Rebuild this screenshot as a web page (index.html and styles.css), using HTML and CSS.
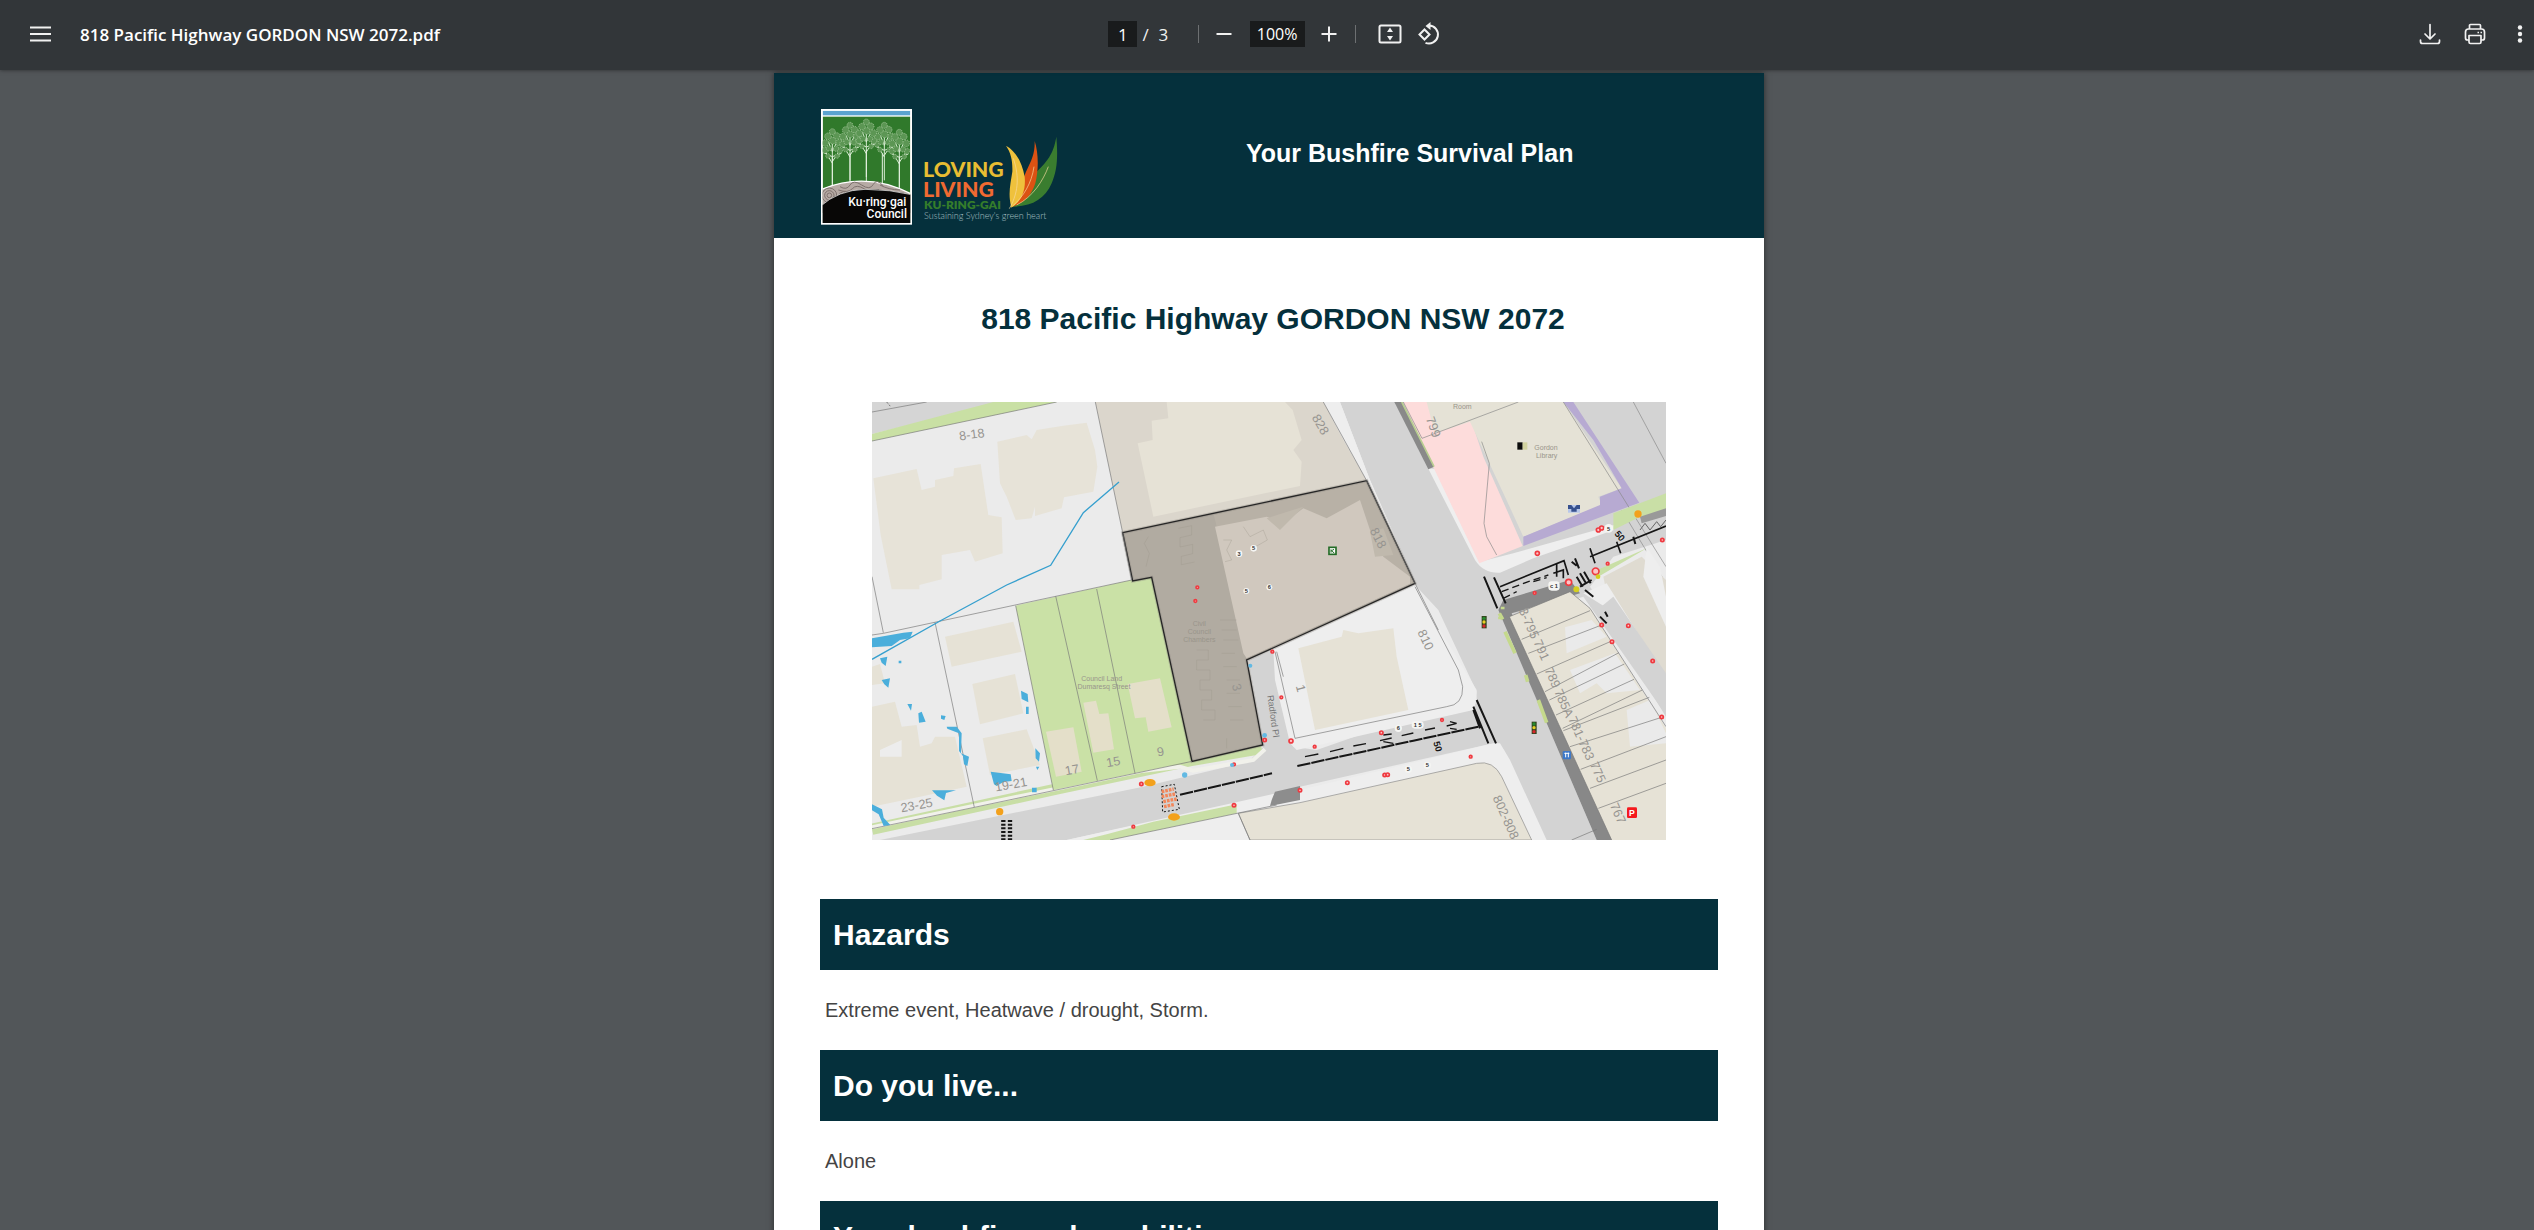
FILE: index.html
```html
<!DOCTYPE html>
<html lang="en">
<head>
<meta charset="utf-8">
<meta name="viewport" content="width=device-width, initial-scale=1">
<title>818 Pacific Highway GORDON NSW 2072.pdf</title>
<link rel="stylesheet" href="styles.css">
</head>
<body>
<header class="toolbar">
  <div class="toolbar-start">
    <button class="icon-button" aria-label="Menu"><svg width="24" height="24" viewBox="0 0 24 24"><path d="M2 5.500h21M2 12h21M2 18.500h21" stroke="currentColor" stroke-width="2"/></svg></button>
    <span class="file-name">818 Pacific Highway GORDON NSW 2072.pdf</span>
  </div>
  <div class="toolbar-center">
    <input class="field page-field" type="text" value="1" aria-label="Page number">
    <span class="slash">/</span><span class="page-total">3</span>
    <span class="separator"></span>
    <button class="icon-button" aria-label="Zoom out"><svg width="24" height="24" viewBox="0 0 24 24"><path d="M4.500 12h15" stroke="currentColor" stroke-width="2"/></svg></button>
    <input class="field zoom-field" type="text" value="100%" aria-label="Zoom level">
    <button class="icon-button" aria-label="Zoom in"><svg width="24" height="24" viewBox="0 0 24 24"><path d="M4.500 12h15M12 4.500v15" stroke="currentColor" stroke-width="2"/></svg></button>
    <span class="separator"></span>
    <button class="icon-button fit-button" aria-label="Fit to page"><svg width="24" height="24" viewBox="0 0 24 24"><rect x="1.500" y="3.500" width="21" height="17" rx="1.500" fill="none" stroke="currentColor" stroke-width="2"/><path d="M12 5.500l3 4.500H9zM12 18.500l3-4.500H9z" fill="currentColor"/></svg></button>
    <button class="icon-button" aria-label="Rotate"><svg width="24" height="24" viewBox="0 0 24 24"><g fill="none" stroke="currentColor" stroke-width="2"><path d="M7.500 7.500l5 5-5 5-5-5z"/><path d="M12 3.500a9 9 0 1 1-3.500 17.300"/></g><path d="M13.500 0v8L8.500 4z" fill="currentColor"/></svg></button>
  </div>
  <div class="toolbar-end">
    <button class="icon-button" aria-label="Download"><svg width="24" height="24" viewBox="0 0 24 24" fill="none" stroke="currentColor" stroke-width="1.700" stroke-linecap="round" stroke-linejoin="round"><path d="M12 2.500v14M7 12l5 5 5-5M2.500 18v1.500a2 2 0 0 0 2 2h15a2 2 0 0 0 2-2V18"/></svg></button>
    <button class="icon-button" aria-label="Print"><svg width="24" height="24" viewBox="0 0 24 24" fill="none" stroke="currentColor" stroke-width="1.700" stroke-linejoin="round"><path d="M6.500 7V3.500a1 1 0 0 1 1-1h9a1 1 0 0 1 1 1V7M6 18H4.500a2 2 0 0 1-2-2v-6a3 3 0 0 1 3-3h13a3 3 0 0 1 3 3v6a2 2 0 0 1-2 2H18"/><path d="M6 13.500h12V20a1.500 1.500 0 0 1-1.500 1.500h-9A1.500 1.500 0 0 1 6 20z"/><path d="M14.500 10.500h1.500M17.500 10.500h1.500"/></svg></button>
    <button class="icon-button" aria-label="More actions"><svg width="24" height="24" viewBox="0 0 24 24" fill="currentColor"><circle cx="12" cy="5.500" r="2.200"/><circle cx="12" cy="12" r="2.200"/><circle cx="12" cy="18.500" r="2.200"/></svg></button>
  </div>
</header>
<main class="viewer">
<article class="page">
  <header class="banner">
    <svg class="logo" viewBox="153 147 720 348" role="img" aria-label="Ku-ring-gai Council, Loving Living Ku-ring-gai">
      <defs>
        <g id="tree">
          <path d="M0 175V35M0 105l-20-34M0 100l22-34M0 70l-12-30M0 70l14-30M0 85l-26-12M0 85l27-10" fill="none" stroke="#d8ecd2" stroke-width="3"/>
          <g fill="#5c9654" stroke="#bcd9b4" stroke-width="2" stroke-dasharray="3 3">
            <circle cx="0" cy="10" r="9"/><circle cx="-13" cy="24" r="10"/><circle cx="13" cy="23" r="10"/><circle cx="-21" cy="44" r="10"/><circle cx="1" cy="37" r="10"/><circle cx="21" cy="43" r="10"/><circle cx="-22" cy="66" r="9"/><circle cx="22" cy="66" r="9"/><circle cx="-10" cy="60" r="8"/><circle cx="11" cy="61" r="8"/><circle cx="-13" cy="83" r="7"/><circle cx="14" cy="83" r="7"/>
          </g>
        </g>
        <clipPath id="emblem"><rect x="158" y="152" width="263" height="337"/></clipPath>
      </defs>
      <rect x="153" y="147" width="273" height="347" fill="#fff"/>
      <g clip-path="url(#emblem)">
        <rect x="158" y="152" width="263" height="14" fill="#5ba3d0"/>
        <rect x="158" y="170" width="263" height="320" fill="#30792b"/>
        <use href="#tree" x="187" y="205"/><use href="#tree" x="240" y="186"/><use href="#tree" x="343" y="186"/><use href="#tree" x="388" y="207"/><use href="#tree" x="289" y="176"/>
        <path d="M187 290v90M240 280v90M289 270v98M337 280v90M388 290v95" stroke="#e6f1e2" stroke-width="3"/>
        <path d="M150 390Q290 330 430 405V460H150z" fill="#b6aaa4" stroke="#fff" stroke-width="4"/>
        <g fill="none" stroke="#7d716d" stroke-width="3"><circle cx="178" cy="406" r="7"/><circle cx="178" cy="406" r="14"/><circle cx="178" cy="406" r="22"/><path d="M210 380q20 12 30-5t35 0 35-2 30 5M205 390q30 10 42-4t35 0 45 2M208 400q12-8 25-4M330 375q25 14 60 15"/></g>
        <path d="M150 440Q205 390 285 388Q360 388 430 405V495H150z" fill="#080706" stroke="#fff" stroke-width="2"/>
      </g>
      <g class="logo-council" text-anchor="end"><text x="409" y="437">Ku·ring·gai</text><text x="411" y="475">Council</text></g>
      <text class="logo-word" x="459" y="350" fill="#e8bd32">LOVING</text>
      <text class="logo-word" x="459" y="410" fill="#f06a31">LIVING</text>
      <text class="logo-place" x="462" y="446" fill="#357d2b">KU-RING-GAI</text>
      <text class="logo-tag" x="462" y="477" fill="#a9c1c5">Sustaining Sydney's green heart</text>
      <path d="M859 230C864 290 862 330 845 370C825 417 785 440 728 440C765 400 775 365 800 335C830 305 850 285 859 230z" fill="#3a7d2f"/>
      <path d="M794 243C806 280 806 330 796 370C783 410 760 430 726 441C745 405 755 365 768 335C785 300 795 280 794 243z" fill="#dc5213"/>
      <path d="M708 257C740 275 757 310 764 350C768 390 755 425 724 443C713 400 722 370 727 335C728 305 724 280 708 257z" fill="#efc13c"/>
      <path d="M718 446C750 390 745 340 730 295M728 438C760 410 785 370 792 320M740 435C790 410 820 360 835 320" fill="none" stroke="#f8d9a0" stroke-width="2"/>
    </svg>
    <h1 class="plan-title">Your Bushfire Survival Plan</h1>
  </header>
  <h2 class="address">818 Pacific Highway GORDON NSW 2072</h2>
  <svg class="map" viewBox="36 36 2382 1314" role="img" aria-label="Map of 818 Pacific Highway">
    <rect x="36" y="36" width="2382" height="1314" fill="#ebebeb"/>
    <!-- street along the north-west corner -->
    <path d="M36 36H430L36 132z" fill="#d5d5d5"/>
    <path d="M36 132L400 36H590L36 153z" fill="#c9e0a4"/>
    <path d="M36 66L200 36" stroke="#777" stroke-width="2"/>
    <!-- highway and side streets -->
    <path d="M1440 36H2418V450L2260 500L2190 590L2418 900V975L2170 620L1930 690L2060 1000L2210 1350H2050L1940 1100Q1930 1060 1890 1062L1320 1190L1180 1230L620 1350H60L850 1190L1165 1115L1210 1070L1165 810L1240 780L1260 930L1300 1070L1370 1080L1570 1010L1840 950L1850 905L1735 660L1670 590L1530 270z" fill="#d3d3d3"/>
    <!-- footpaths -->
    <path d="M1390 36H1440L1530 270L1670 590L1735 710L1850 900V930L1840 960L1310 1080L1290 1060L1245 870L1240 780L1660 590L1520 272z" fill="#eee"/>
    <path d="M1705 236H1725L1860 515L1960 490L2262 405V420L2020 505L1920 548Q1870 550 1845 510z" fill="#efefef"/>
    <path d="M36 1318L590 1197L990 1112L1205 1075" fill="none" stroke="#c8dea5" stroke-width="34"/>
    <path d="M36 1312L300 1256L590 1196L850 1142L960 1130L1000 1142L1180 1110L1215 1078" fill="none" stroke="#f1f1eb" stroke-width="12"/>
    <path d="M620 1350L1240 1212L1320 1200L1900 1060H1920L1950 1110L2060 1350z" fill="#eee"/>
    <path d="M740 1333L880 1295L1130 1243V1270L750 1350H670z" fill="#c9dfa6"/>
    <path d="M1235 1230L1245 1205L1320 1188V1230L1230 1248z" fill="#8d8d8d"/>
    <!-- buildings north-west -->
    <g fill="#e7e3d8">
      <path d="M40 265L170 237L185 300L225 290V270L280 258L282 235L362 222L385 375L425 382L428 490L345 515L330 480L245 495V568L178 585V598H95L62 435z"/>
      <path d="M412 155L500 135L515 148L530 120L610 107L680 98L705 180L712 230L700 305L612 322L605 355L525 378V350L515 385L467 390L440 320L420 280z"/>
    </g>
    <!-- buildings south-west -->
    <g fill="#e6e2d6">
      <path d="M255 740L460 695L485 785L275 830z"/><path d="M337 882L465 852L490 970L360 1003z"/><path d="M368 1045L500 1018L540 1125L390 1155z"/>
      <path d="M36 950L105 935L125 1010L170 1005L180 1070L215 1060L225 1040L285 1040L320 1190L180 1220L36 1250z"/><path d="M36 830L60 822L75 880L36 885z"/>
    </g>
    <path d="M60 1080L125 1050V1100H60z" fill="#ededed"/>
    <!-- council lots -->
    <path d="M467 647L815 570L875 562L996 1114L580 1200z" fill="#cae1a6"/>
    <g fill="#e4dfc9"><path d="M558 1025L640 1012L665 1145L588 1160z"/><path d="M670 938L708 932L718 972L745 970L762 1078L700 1088z"/><path d="M803 882L900 865L935 1012L865 1025L857 982L825 985z"/></g>
    <!-- lot to the north -->
    <path d="M706 36H1390L1445 140L1520 272L788 428z" fill="#dbd6cc"/>
    <path d="M920 36H1275L1298 60L1325 150L1300 180L1325 215L1320 288L880 380L833 160L878 150L875 92L925 85z" fill="#e6e2d6"/>
    <!-- highlighted property -->
    <path d="M788 428L1520 272L1665 580L1160 810L1208 1065L996 1114L875 562L818 573z" fill="#b8b1a6"/>
    <path d="M788 428L1060 370L1100 530L1160 810L1170 850L1208 1065L996 1114L875 562L818 573z" fill="#b1aba1"/>
    <path d="M1065 410L1220 380L1270 400L1330 355L1400 385L1500 330L1530 420L1570 500L1650 560V582L1160 805L1150 790z" fill="#d0c8be"/>
    <path d="M1220 385L1330 350L1260 420zM1530 425L1570 415L1600 495L1545 500z" fill="#c0b9ad"/>
    <path d="M788 428L1520 272L1665 580L1160 810L1208 1065L996 1114L875 562L818 573z" fill="none" stroke="#8f8a82" stroke-width="10" stroke-opacity=".4"/>
    <path d="M788 428L1520 272L1665 580L1160 810L1208 1065L996 1114L875 562L818 573z" fill="none" stroke="#262626" stroke-width="4"/>
    <g fill="none" stroke="#9b958b" stroke-width="2" opacity=".5"><path d="M955 415l40-8v28l-35 8v28l38-8v28l-34 8v25l40-8M865 440l-12 20 15 30-10 40M1090 450h25l-15 30 15 30-20 5M1150 410l20 30 40-20 12 30-35 20M1080 690h50M1085 720h45M1090 750h45M1085 790h40M1090 830h40M1100 870h40M1100 910h40M1105 950h40M1110 990h40M1010 780h35v30h-35v30h40v30h-30v30h35v30h-30v30h40v30h-35M1100 1045v30"/></g>
    <!-- lot 810 -->
    <path d="M1315 775L1445 740L1450 720L1495 730L1600 715L1610 800L1645 960L1365 1020z" fill="#e6e2d6"/>
    <path d="M1245 785L1305 1045L1760 950Q1810 945 1808 890L1795 840L1665 590M1250 785L1270 860" fill="none" stroke="#777" stroke-width="2"/>
    <!-- lot 802-808 -->
    <path d="M1135 1270L1320 1238L1850 1120Q1900 1110 1925 1160L2015 1350H1170z" fill="#e6e2d6" stroke="#8a8a8a" stroke-width="2"/>
    <!-- library block -->
    <path d="M1630 36H1715L1835 95L1870 200L1988 468L1858 520L1700 190z" fill="#fddcdb"/>
    <path d="M1700 36H2110L2285 295L2215 320L2225 345L1990 440L1935 320L1830 95L1725 130z" fill="#e5e2d6"/>
    <path d="M2110 36H2140L2338 338L1990 468V440L2220 345V320L2285 295L2200 150z" fill="#b7aad2"/>
    <path d="M1603 36H1625L1722 230L1705 238z" fill="#898989"/><path d="M1625 36L1722 230" stroke="#b7ce90" stroke-width="5"/>
    <path d="M1630 36L1686 145L1975 36M1865 155L1888 220L1872 400L1880 440L1910 495M2110 36L2418 530M2320 36L2418 220M2285 360L2460 650" fill="none" stroke="#888" stroke-width="2"/>
    <!-- east green verge and streets -->
    <path d="M2260 370L2418 310V370L2340 380L2260 420zM2200 545L2360 475L2215 560z" fill="#c9dfa6"/>
    <path d="M2340 380L2418 355V378L2345 400z" fill="#999"/>
    <path d="M2230 560L2345 500L2418 570V880L2240 610z" fill="#dfdbd1"/><path d="M2170 610L2240 580L2418 865V920L2250 660z" fill="#eee"/><path d="M2360 470L2400 530L2418 620V710L2350 560z" fill="#eee"/>
    <path d="M1915 660L1930 630L2130 570L2160 610L1955 670L2265 1350H2210L2060 1000z" fill="#888"/>
    <path d="M2218 655L2418 980V850L2260 620z" fill="#d3d3d3"/>
    <!-- shop lots -->
    <path d="M1948 680L2130 605L2190 655L2418 1015V1350H2255z" fill="#e6e2d6"/>
    <path d="M2115 712L2195 690L2240 740L2120 790zM2130 840L2265 790L2340 900L2240 910L2210 880L2160 910zM2300 960L2370 930L2418 1030V1060L2310 1070z" fill="#eaeaea"/>
    <path d="M1948 680L2130 605L2190 655L2418 1010M1948 680L2255 1350M1985 748L2190 662M2005 790L2225 705M2030 852L2255 753M2055 905L2277 788M2068 930L2293 822M2088 975L2322 868M2108 1015L2347 900M2110 1022L2368 922M2130 1070L2405 982M2162 1138L2418 1040M2190 1195L2418 1110M2215 1255L2418 1180M2135 1350L2210 1318" fill="none" stroke="#777" stroke-width="2"/>
    <path d="M1918 670l10 18M1935 725l30 65M1997 855l6 20M2035 930l25 68M1928 650v8M1920 680v8" stroke="#c5d98c" stroke-width="11"/>
    <!-- lot boundaries -->
    <path d="M36 153L590 36M706 36L788 428L815 570L70 730L36 735M36 560L70 728M225 697L343 1252M467 647L580 1200M587 618L712 1172M710 597L825 1150M36 1316L343 1252L996 1114M1390 36L1520 272L1665 580L1735 720M750 1350L1250 1245M1135 1270L1170 1350" fill="none" stroke="#777" stroke-width="2"/>
    <!-- watercourse -->
    <path d="M777 276L670 368L572 526L440 585L240 693L36 808" fill="none" stroke="#359fce" stroke-width="4"/>
    <path d="M36 745L130 728L158 725L150 745L120 750L95 768L36 772zM60 805l22-5-5 28-12-10zM65 870l25-5-5 28-12-10zM483 902l20 10 2 25-20-10zM498 950h8v22h-8zM142 942h14l-3 20zM175 970l10-5 12 30-20 3zM243 976l14 2-4 12-10-4zM260 1010h30l15 20-2 60 24 10-5 28-10-5-3-25-12-15V1030l-35-14zM526 1075l14 15-3 25-10-10zM528 1130h10l-6 10zM392 1145l60 8 3 20-25 3-20 12-8-5zM216 1201h72l-30 8-5 22-22-14zM516 1193h14v14h-14zM36 1243l30 15 5 25 20 22-20 3-15-35-20-12zM116 812h8v8h-8z" fill="#4aaedb"/>
    <!-- road markings -->
    <g fill="none" stroke="#161616">
      <path d="M960 1214L1236 1150M1312 1128L1660 1052L1855 1010" stroke-width="6" stroke-dasharray="40 3"/>
      <path d="M1335 1100l40-8M1410 1085l40-10M1480 1068l38-7M1560 1052l35-8M1625 1037l35-8M1695 1020l30-6M1760 1008l30-8M1570 1035l25-3M1570 1055l30 5M1770 995l20 5M1770 1015l20 3" stroke-width="4"/>
      <path d="M1840 950L1885 1060M1850 930L1908 1060M1840 960L1860 1015M1872 560L1912 655M1902 562L1937 640" stroke-width="6"/>
      <path d="M1920 590L2112 512L2125 555M2190 500L2418 408M2270 455l12 35M2190 475l15 45M2080 550l30-10v25M2090 520v40" stroke-width="5"/>
      <path d="M1925 605l80-30 60-20M1930 625l40-20M2020 575l40-12" stroke-width="4" stroke-dasharray="22 12"/>
      <path d="M2150 560l18 30M2160 550l18 30M2172 545l20 35M2145 505l12 30M2135 515l15 12M2175 600l25 20M2220 680l20 20M2235 665l8 15M2320 440l6 22M2160 590l35-20" stroke-width="6"/>
      <path d="M2340 420l15-20 15 20 20-25 12 15 16-20" stroke="#666" stroke-width="3"/>
      <path d="M430 1290v60M450 1290v60" stroke-width="13" stroke-dasharray="6 5"/>
      <path d="M905 1190l38-7 15 75-50 8z" stroke-width="3" stroke-dasharray="6 6"/>
      <path d="M80 36l12 14" stroke="#555" stroke-width="3" stroke-dasharray="3 3"/>
    </g>
    <path d="M905 1205l36-8M905 1220l40-8M910 1235l40-8M912 1250l30-6" stroke="#f2875a" stroke-width="10" stroke-dasharray="8 3"/>
    <!-- signs -->
    <g fill="#fbc5c7" stroke="#ef3a40" stroke-width="5">
      <circle cx="1012" cy="592" r="4"/><circle cx="1006" cy="633" r="4"/><circle cx="1237" cy="785" r="4"/><circle cx="1264" cy="922" r="4"/><circle cx="1293" cy="1053" r="6"/><circle cx="1214" cy="1050" r="5"/><circle cx="1564" cy="1028" r="5"/><circle cx="1364" cy="1070" r="4"/><circle cx="1746" cy="990" r="4"/><circle cx="1832" cy="1100" r="4"/><circle cx="1574" cy="1155" r="5"/><circle cx="1583" cy="1154" r="5"/><circle cx="1462" cy="1178" r="5"/><circle cx="1320" cy="1201" r="5"/><circle cx="1122" cy="1246" r="5"/><circle cx="820" cy="1310" r="4"/><circle cx="844" cy="1182" r="5"/><circle cx="1122" cy="1123" r="4"/><circle cx="2032" cy="490" r="6"/><circle cx="2215" cy="420" r="6"/><circle cx="2225" cy="414" r="6"/><circle cx="2024" cy="609" r="4"/><circle cx="2126" cy="577" r="9"/><circle cx="2207" cy="544" r="10"/><circle cx="2243" cy="521" r="4"/><circle cx="2407" cy="450" r="5"/><circle cx="2225" cy="705" r="5"/><circle cx="2256" cy="755" r="5"/><circle cx="2305" cy="707" r="5"/><circle cx="2378" cy="813" r="5"/><circle cx="2405" cy="981" r="5"/>
    </g>
    <g fill="#f3a11c"><circle cx="419" cy="1265" r="11"/><ellipse cx="870" cy="1178" rx="17" ry="11"/><ellipse cx="942" cy="1281" rx="18" ry="11"/><circle cx="2334" cy="372" r="11"/></g>
    <g fill="#d4cf20"><circle cx="2149" cy="598" r="9"/><circle cx="2214" cy="560" r="7"/></g>
    <g fill="#62b9e3"><circle cx="1171" cy="827" r="6"/><circle cx="1214" cy="1036" r="7"/><circle cx="974" cy="1155" r="8"/><circle cx="1116" cy="1125" r="6"/></g>
    <g fill="#f5f5f3"><circle cx="1137" cy="491" r="10"/><circle cx="1181" cy="475" r="10"/><circle cx="1159" cy="603" r="9"/><circle cx="1228" cy="592" r="9"/><circle cx="1615" cy="1015" r="11"/><rect x="1655" y="994" width="36" height="22" rx="10"/><circle cx="1645" cy="1138" r="11"/><circle cx="1702" cy="1126" r="11"/><rect x="2065" y="574" width="34" height="28" rx="10"/><circle cx="2246" cy="415" r="13"/></g>
    <g class="map-sign" text-anchor="middle"><text x="1137" y="497">3</text><text x="1181" y="481">5</text><text x="1159" y="609">5</text><text x="1228" y="598">6</text><text x="1615" y="1021">6</text><text x="1673" y="1011">1 5</text><text x="1645" y="1144">5</text><text x="1702" y="1132">5</text><text x="2082" y="595">c 1</text><text x="2246" y="422">5</text></g>
    <g><rect x="1865" y="678" width="15" height="37" fill="#33451f"/><circle cx="1872" cy="685" r="5" fill="#288b2e"/><circle cx="1872" cy="696" r="5" fill="#e7cf23"/><circle cx="1872" cy="708" r="5" fill="#d7262b"/><rect x="2015" y="995" width="15" height="37" fill="#33451f"/><circle cx="2022" cy="1002" r="5" fill="#288b2e"/><circle cx="2022" cy="1013" r="5" fill="#e7cf23"/><circle cx="2022" cy="1025" r="5" fill="#d7262b"/></g>
    <rect x="1407" y="472" width="21" height="21" fill="#fff" stroke="#236c27" stroke-width="5"/><path d="M1413 478v10M1413 483l9-5M1415 483l8 6" stroke="#236c27" stroke-width="3"/>
    <rect x="1972" y="157" width="16" height="22" fill="#0c0c0c"/><rect x="1988" y="157" width="14" height="22" fill="#d2d3a0"/>
    <rect x="2124" y="345" width="36" height="23" fill="#b7c7ea"/><path d="M2124 345h10l8 10 8-10h10v12h-10v8h-16v-8h-10z" fill="#36508e"/>
    <rect x="2108" y="1083" width="25" height="25" rx="4" fill="#3d79c9"/><path d="M2113 1090h15M2117 1088v14M2125 1088v14" stroke="#fff" stroke-width="3"/>
    <rect x="2301" y="1252" width="30" height="32" rx="4" fill="#f5191d"/><text class="map-parking" x="2316" y="1277" text-anchor="middle">P</text>
    <!-- labels -->
    <g class="map-number" text-anchor="middle">
      <text transform="translate(337 146) rotate(-8)">8-18</text>
      <text transform="translate(1370 110) rotate(60)">828</text>
      <text transform="translate(1543 450) rotate(63)">818</text>
      <text transform="translate(1708 115) rotate(70)">799</text>
      <text transform="translate(1685 755) rotate(65)">810</text>
      <text transform="translate(1310 898) rotate(75)">1</text>
      <text transform="translate(1118 895) rotate(75)">3</text>
      <text transform="translate(172 1258) rotate(-10)">23-25</text>
      <text transform="translate(455 1196) rotate(-10)">19-21</text>
      <text transform="translate(638 1152) rotate(-10)">17</text><text transform="translate(762 1128) rotate(-10)">15</text><text transform="translate(904 1098) rotate(-10)">9</text>
      <text transform="translate(1995 705) rotate(66)">3-795</text>
      <text transform="translate(2033 785) rotate(66)">791</text><text transform="translate(2066 868) rotate(66)">789</text><text transform="translate(2100 945) rotate(66)">785A</text><text transform="translate(2152 1050) rotate(66)">781-783</text><text transform="translate(2202 1152) rotate(66)">775</text><text transform="translate(2262 1275) rotate(66)">767</text>
      <text transform="translate(1926 1287) rotate(66)">802-808</text>
    </g>
    <g class="map-place" text-anchor="middle">
      <text x="1807" y="56">Room</text><text x="2058" y="180">Gordon</text><text x="2060" y="205">Library</text>
      <text x="725" y="872">Council Land</text><text x="732" y="897">Dumaresq Street</text>
      <text x="1018" y="708">Civil</text><text x="1018" y="732">Council</text><text x="1018" y="757">Chambers</text>
    </g>
    <text class="map-street" transform="translate(1222 917) rotate(82)">Radford Pl</text>
    <g class="map-speed"><text transform="translate(1720 1057) rotate(75)">50</text><text transform="translate(2262 432) rotate(50)">50</text></g>
  </svg>
  <section class="section"><h2 class="section-title">Hazards</h2><p class="section-text">Extreme event, Heatwave / drought, Storm.</p></section>
  <section class="section"><h2 class="section-title">Do you live...</h2><p class="section-text">Alone</p></section>
  <section class="section"><h2 class="section-title">Your bushfire vulnerabilities are...</h2></section>
</article>
</main>
</body>
</html>
```
FILE: styles.css
```css
* { box-sizing: border-box; }

body {
  display: flex;
  flex-direction: column;
  height: 100vh;
  margin: 0;
  overflow: hidden;
  background: #525659;
  font-family: "Liberation Sans", Arial, sans-serif;
}

.toolbar {
  position: relative;
  z-index: 1;
  display: grid;
  grid-template-columns: 1fr auto 1fr;
  align-items: center;
  flex: none;
  height: 70px;
  padding: 0 2px 2px 28px;
  background: #323639;
  color: #f1f1f1;
  box-shadow: 0 0 4px rgba(0, 0, 0, .5);
  font-family: "Open Sans", "Noto Sans", sans-serif;
  font-size: 17px;
}

.toolbar-start, .toolbar-center, .toolbar-end { display: flex; align-items: center; }
.toolbar-start { gap: 28px; }
.toolbar-center { margin-right: 11px; }
.toolbar-end { justify-content: flex-end; gap: 21px; }
.file-name { color: #fff; font-weight: 600; white-space: nowrap; }

.icon-button {
  display: grid;
  place-items: center;
  width: 24px;
  height: 24px;
  padding: 0;
  border: 0;
  background: none;
  color: inherit;
}

.field {
  height: 26px;
  padding: 0;
  border: 0;
  background: #191b1c;
  color: #fff;
  font: inherit;
  text-align: center;
}

.page-field { width: 29px; }
.zoom-field { width: 55px; margin: 0 12px 0 14px; font-size: 16px; }
.slash { margin: 0 10px 0 5px; }
.page-total { width: 10px; }
.separator { width: 1px; height: 18px; margin: 0 13px 0 29px; background: #6d7072; }
.zoom-field ~ .separator { margin: 0 22px 0 14px; }
.fit-button { margin-right: 15px; }

.viewer { flex: 1; min-height: 0; padding: 3px 0 0 4px; overflow: hidden; }

.page {
  width: 100%;
  max-width: 990px;
  min-height: 1400px;
  margin: 0 auto;
  background: #fff;
  box-shadow: 0 0 6px rgba(0, 0, 0, .5);
}

.banner {
  display: flex;
  gap: 185px;
  height: 165px;
  padding: 36px 47px 0;
  background: #05303c;
  color: #fff;
}

.logo { flex: none; width: 240px; height: 116px; }
.plan-title { margin: 29px 0 0; font-size: 25px; line-height: 30px; }
.address { margin: 61px 0 63px; padding-left: 8px; color: #05303c; font-size: 30px; line-height: 40px; text-align: center; }
.map { display: block; width: calc(100% - 196px); margin: 0 auto 59px; }
.section { margin: 0 46px; }
.section-title { margin: 0; padding: 0 13px; background: #05303c; color: #fff; font-size: 30px; line-height: 71px; }
.section-text { margin: 0; padding: 28px 5px; color: #444; font-size: 20px; line-height: 24px; }

.logo-council { fill: #fff; font: 500 36px/1 Roboto, sans-serif; }
.logo-word { font: 900 64px Lato, sans-serif; }
.logo-place { font: 800 36px Lato, sans-serif; }
.logo-tag { font: 300 27px Lato, sans-serif; }

.map text { font-family: "Liberation Sans", Arial, sans-serif; }
.map-number { fill: #969490; font-size: 38px; }
.map-place { fill: #99958b; font-size: 21px; }
.map-street { fill: #777; font-size: 27px; }
.map-sign { fill: #333; font-size: 17px; font-weight: 700; }
.map .map-speed { fill: #161616; font-size: 28px; font-weight: 700; }
.map .map-parking { fill: #fff; font-size: 26px; font-weight: 700; }
```
